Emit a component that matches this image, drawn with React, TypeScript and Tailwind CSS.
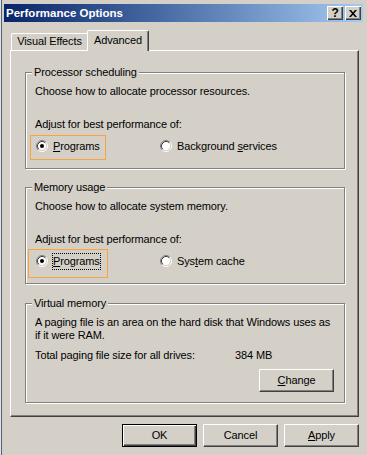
import type { ReactNode } from 'react'

function Radio({ checked = false, children }: { checked?: boolean; children: ReactNode }) {
  return (
    <div className="flex items-center gap-[5px]">
      <svg width="12" height="12" viewBox="0 0 12 12" className="shrink-0">
        <circle cx="6" cy="6" r="4.5" fill="#fff" />
        <path d="M2.11 9.89 A5.5 5.5 0 0 1 9.89 2.11" fill="none" stroke="#808080" />
        <path d="M9.89 2.11 A5.5 5.5 0 0 1 2.11 9.89" fill="none" stroke="#fff" />
        <path d="M2.82 9.18 A4.5 4.5 0 0 1 9.18 2.82" fill="none" stroke="#404040" />
        <path d="M9.18 2.82 A4.5 4.5 0 0 1 2.82 9.18" fill="none" stroke="#d4d0c8" />
        {checked && <circle cx="6" cy="6" r="2" fill="#000" />}
      </svg>
      {children}
    </div>
  )
}

function Button({ children, primary = false }: { children: ReactNode; primary?: boolean }) {
  const frame = primary
    ? 'border-black shadow-[inset_1px_1px_0_#fff,inset_-1px_-1px_0_#404040,inset_-2px_-2px_0_#808080]'
    : 'border-t-white border-l-white border-r-[#404040] border-b-[#404040] shadow-[inset_-1px_-1px_0_#808080]'
  return (
    <div className={`flex h-[23px] w-[75px] items-center justify-center border ${frame}`}>
      {children}
    </div>
  )
}

function Group({ title, className, children }: { title: string; className: string; children: ReactNode }) {
  return (
    <div className={`flex flex-col border border-[#808080] pl-[9px] shadow-[inset_1px_1px_0_#fff,1px_1px_0_#fff] ${className}`}>
      <span className="-mt-[7px] ml-[-3px] self-start bg-[#d4d0c8] px-[2px]">{title}</span>
      {children}
    </div>
  )
}

function CaptionButton({ children }: { children: ReactNode }) {
  return (
    <div className="flex h-[14px] w-[16px] items-center justify-center bg-[#d4d0c8] shadow-[inset_1px_1px_0_#fff,inset_-1px_-1px_0_#404040,inset_-2px_-2px_0_#808080]">
      {children}
    </div>
  )
}

export default function App() {
  return (
    <div className="h-[455px] w-[367px] overflow-hidden bg-[#d4d0c8] pl-[4px] pr-[4px] pt-[4px] font-['Liberation_Sans',Arial,sans-serif] text-[11px] leading-[13px] tracking-[-0.12px] text-black shadow-[inset_1px_0_0_#e4e2dc,inset_2px_0_0_#52627a]">
      {/* title bar */}
      <div className="flex h-[18px] items-center bg-gradient-to-r from-[#0a246a] to-[#a6caf0] pl-[2px] pr-[2px]">
        <span className="text-[11.5px] font-bold tracking-normal text-white">Performance Options</span>
        <div className="ml-auto flex gap-[2px]">
          <CaptionButton>
            <span className="text-[12px] font-bold leading-[12px]">?</span>
          </CaptionButton>
          <CaptionButton>
            <svg width="8" height="7" viewBox="0 0 8 7">
              <path d="M0 0h2l2 2.2L6 0h2L5 3.5L8 7H6L4 4.8L2 7H0l3-3.5z" fill="#000" />
            </svg>
          </CaptionButton>
        </div>
      </div>

      <div className="ml-[6px] mt-[8px] w-[349px]">
        {/* tabs */}
        <div className="flex h-[20px] items-end pl-[1px]">
          <div className="flex h-[17px] w-[76px] items-center justify-center rounded-tl-[2px] border-l border-t border-white pb-px">
            Visual Effects
          </div>
          <div className="relative z-10 -mb-px flex h-[21px] w-[62px] items-center justify-center rounded-t-[2px] border-l border-r border-t border-white border-r-[#404040] bg-[#d4d0c8] pb-[2px] shadow-[inset_-1px_0_0_#808080]">
            Advanced
          </div>
        </div>

        {/* panel */}
        <div className="h-[367px] border border-l-white border-t-white border-r-[#404040] border-b-[#404040] pl-[14px] pr-[13px] pt-[21px] shadow-[inset_-1px_-1px_0_#808080]">
          <Group title="Processor scheduling" className="h-[97px]">
            <p className="mt-[6px]">Choose how to allocate processor resources.</p>
            <p className="mt-[20px]">Adjust for best performance of:</p>
            <div className="mt-[9px] flex h-[12px] items-center pl-px">
              <div className="relative w-[124px]">
                <span className="absolute left-[-6px] top-[-5px] h-[25px] w-[76px] border border-[#f9a33c]" />
                <Radio checked>
                  <span><span className="underline">P</span>rograms</span>
                </Radio>
              </div>
              <Radio>
                <span>Background <span className="underline">s</span>ervices</span>
              </Radio>
            </div>
          </Group>

          <Group title="Memory usage" className="mt-[18px] h-[97px]">
            <p className="mt-[6px]">Choose how to allocate system memory.</p>
            <p className="mt-[20px]">Adjust for best performance of:</p>
            <div className="mt-[9px] flex h-[12px] items-center pl-px">
              <div className="relative w-[124px]">
                <span className="absolute left-[-8px] top-[-6px] h-[29px] w-[80px] border border-[#f9a33c]" />
                <Radio checked>
                  <span className="relative">
                    <span className="underline">P</span>rograms
                    <span className="absolute -bottom-[2px] -left-px -right-[1px] -top-[2px] border border-dotted border-black" />
                  </span>
                </Radio>
              </div>
              <Radio>
                <span>Sys<span className="underline">t</span>em cache</span>
              </Radio>
            </div>
          </Group>

          <Group title="Virtual memory" className="mt-[19px] h-[100px]">
            <p className="mt-[6px] whitespace-nowrap">
              A paging file is an area on the hard disk that Windows uses as
              <br />
              if it were RAM.
            </p>
            <div className="mt-[7px] flex">
              <span className="w-[200px]">Total paging file size for all drives:</span>
              <span>384 MB</span>
            </div>
            <div className="mt-[7px] flex justify-end pr-[10px]">
              <Button>
                <span><span className="underline">C</span>hange</span>
              </Button>
            </div>
          </Group>
        </div>

        {/* dialog buttons */}
        <div className="mt-[7px] flex justify-end gap-[6px]">
          <Button primary>OK</Button>
          <Button>Cancel</Button>
          <Button>
            <span><span className="underline">A</span>pply</span>
          </Button>
        </div>
      </div>
    </div>
  )
}
